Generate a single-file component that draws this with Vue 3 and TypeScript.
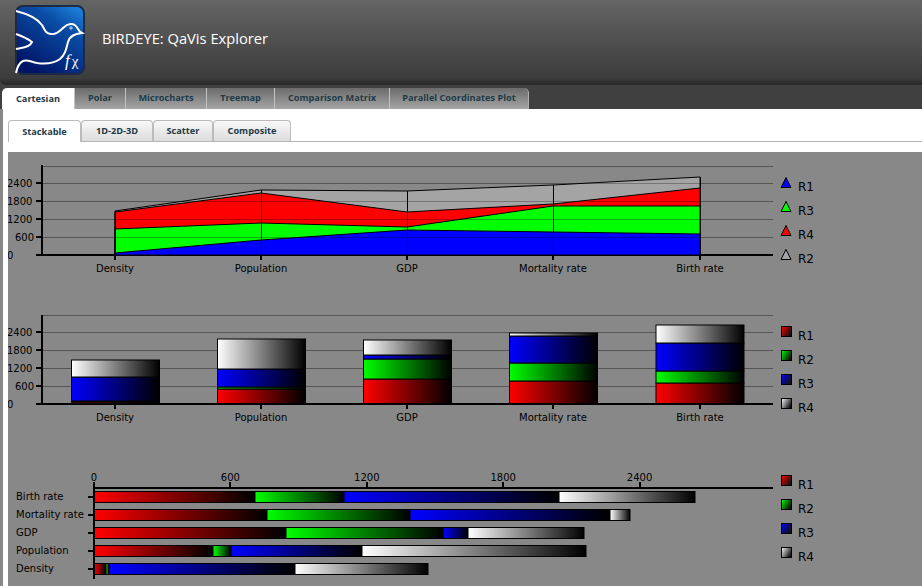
<template>
  <div class="page">
    <header class="top">
      <svg class="logo" width="72" height="72" viewBox="0 0 72 72">
        <defs>
          <linearGradient id="logoBg" x1="1" y1="0" x2="0.35" y2="1">
            <stop offset="0" stop-color="#1f8ae6" />
            <stop offset="0.35" stop-color="#0a4da6" />
            <stop offset="1" stop-color="#001566" />
          </linearGradient>
        </defs>
        <rect x="2" y="2" width="68" height="68" rx="7" fill="url(#logoBg)" stroke="#1c2a44" stroke-width="2" />
        <path d="M2 7 C14 10 23 14 28 21 C31 26 31 29 37 30 C42 31 46 27 49 24 C53 20 60 17 64 25 C65 27 66 28 68 29 C62 30 56 31 54 38 C52 46 51 51 46 55 C39 60 30 60 23 59 C17 58 13 55 9 57 C5 59 3 64 2 69" fill="none" stroke="#fff" stroke-width="2" />
        <path d="M2 30 C8 32 14 35 18 38 C17 40 16 41 14 42 C10 44 6 44 2 45" fill="none" stroke="#fff" stroke-width="2" />
        <circle cx="57" cy="24" r="1.2" fill="none" stroke="#fff" stroke-width="0.8" />
        <text x="51" y="62" class="fx">f<tspan class="chi" dx="2">χ</tspan></text>
      </svg>
      <span class="title">BIRDEYE: QaVis Explorer</span>
    </header>

    <nav class="tabs">
      <span
        v-for="(t, i) in mainTabs"
        :key="t"
        class="tab"
        :class="{ active: i === 0 }"
      >{{ t }}</span>
    </nav>

    <main class="content">
      <nav class="subtabs">
        <span
          v-for="(t, i) in subTabs"
          :key="t"
          class="subtab"
          :class="{ active: i === 0 }"
        >{{ t }}</span>
      </nav>

      <section class="charts">
        <svg class="chart" width="914" height="434" viewBox="8 152 914 434">
          <defs>
            <linearGradient v-for="c in fills" :id="'h' + c.name" :key="'h' + c.name" x1="0" y1="0" x2="1" y2="0">
              <stop offset="0" :stop-color="c.color" />
              <stop offset="1" stop-color="#000" />
            </linearGradient>
            <linearGradient v-for="c in fills" :id="'d' + c.name" :key="'d' + c.name" x1="0" y1="0" x2="1" y2="0.6">
              <stop offset="0" :stop-color="c.color" />
              <stop offset="1" stop-color="#111" />
            </linearGradient>
            <clipPath id="areaClip">
              <polygon :points="areas[0].points" />
            </clipPath>
          </defs>

          <!-- area chart -->
          <line v-for="y in gridFor(255)" :key="'a' + y" x1="42" x2="773" :y1="y + 0.5" :y2="y + 0.5" class="grid" />
          <line x1="42" x2="42" y1="165" y2="256" class="axis" />
          <line x1="36" x2="773" y1="255" y2="255" class="axis" />
          <polygon v-for="a in areas" :key="a.name" :points="a.points" :fill="a.color" class="outline" />
          <g clip-path="url(#areaClip)">
            <line v-for="y in gridFor(255).slice(1, 5)" :key="'o' + y" x1="115" x2="700" :y1="y + 0.5" :y2="y + 0.5" class="grid over" />
          </g>
          <line v-for="(x, i) in catX" :key="'v' + x" :x1="x" :x2="x" :y1="grayTop[i]" y2="255" class="thin" />
          <g v-for="(y, i) in gridFor(255)" :key="'b' + y">
            <line x1="36" x2="42" :y1="y" :y2="y" class="axis" v-if="i < 5" />
            <text v-if="i < 5" :x="yLabelX[i]" :y="y + 4" class="lbl">{{ yLabels[i] }}</text>
          </g>
          <g v-for="(c, i) in cats" :key="'c' + c">
            <line :x1="catX[i]" :x2="catX[i]" y1="255" y2="260" class="axis" />
            <text :x="catX[i]" y="272" text-anchor="middle" class="lbl">{{ c }}</text>
          </g>
          <g v-for="(l, i) in areaLegend" :key="'l' + l.name">
            <polygon :points="triangle(i)" :fill="l.color" stroke="#000" />
            <text x="798" :y="191 + i * 24" class="leg">{{ l.name }}</text>
          </g>

          <!-- stacked columns -->
          <line v-for="y in gridFor(404)" :key="'d' + y" x1="42" x2="773" :y1="y + 0.5" :y2="y + 0.5" class="grid" />
          <g v-for="(b, i) in columns" :key="'col' + i">
            <rect
              v-for="s in b.parts"
              :key="s.name"
              :x="b.x"
              :y="s.y"
              width="88"
              :height="s.h"
              :fill="'url(#h' + s.name + ')'"
              class="outline"
            />
          </g>
          <g v-for="(y, i) in gridFor(404)" :key="'e' + y">
            <line x1="36" x2="42" :y1="y" :y2="y" class="axis" v-if="i < 5" />
            <text v-if="i < 5" :x="yLabelX[i]" :y="y + 4" class="lbl">{{ yLabels[i] }}</text>
          </g>
          <line x1="42" x2="42" y1="315" y2="405" class="axis" />
          <line x1="36" x2="773" y1="404" y2="404" class="axis" />
          <g v-for="(c, i) in cats" :key="'f' + c">
            <line :x1="catX[i]" :x2="catX[i]" y1="404" y2="409" class="axis" />
            <text :x="catX[i]" y="421" text-anchor="middle" class="lbl">{{ c }}</text>
          </g>
          <g v-for="(n, i) in legendNames" :key="'g' + n">
            <rect x="781.5" :y="326.5 + i * 24" width="10" height="10" :fill="'url(#d' + fills[i].name + ')'" stroke="#000" />
            <text x="798" :y="340 + i * 24" class="leg">{{ n }}</text>
          </g>

          <!-- horizontal bars -->
          <g v-for="(r, i) in rows" :key="r.label">
            <rect
              v-for="s in r.parts"
              :key="s.name"
              :x="s.x"
              :y="491.5 + i * 18"
              :width="s.w"
              height="11"
              :fill="'url(#h' + s.name + ')'"
              class="outline"
            />
            <line x1="88" x2="94" :y1="497 + i * 18" :y2="497 + i * 18" class="axis" />
            <text x="16" :y="500 + i * 18" class="lbl">{{ r.label }}</text>
          </g>
          <line x1="94" x2="94" y1="482" y2="579" class="axis" />
          <line x1="94" x2="773" y1="488" y2="488" class="axis" />
          <g v-for="(v, i) in hTicks" :key="v">
            <line :x1="94 + i * 136.4" :x2="94 + i * 136.4" y1="482" y2="488" class="axis" />
            <text :x="94 + i * 136.4" y="481" text-anchor="middle" class="lbl">{{ v }}</text>
          </g>
          <g v-for="(n, i) in legendNames" :key="'h' + n">
            <rect x="781.5" :y="475.5 + i * 24" width="10" height="10" :fill="'url(#d' + fills[i].name + ')'" stroke="#000" />
            <text x="798" :y="489 + i * 24" class="leg">{{ n }}</text>
          </g>
        </svg>
      </section>
    </main>
  </div>
</template>

<script setup lang="ts">
type Fill = { name: string; color: string }

const mainTabs: string[] = ['Cartesian', 'Polar', 'Microcharts', 'Treemap', 'Comparison Matrix', 'Parallel Coordinates Plot']
const subTabs: string[] = ['Stackable', '1D-2D-3D', 'Scatter', 'Composite']

const cats: string[] = ['Density', 'Population', 'GDP', 'Mortality rate', 'Birth rate']
const catX: number[] = [115, 261, 407, 553, 700]
const yLabels: string[] = ['0', '600', '1200', '1800', '2400']
const yLabelX: number[] = [7, 15, 7, 7, 7]
const hTicks: string[] = ['0', '600', '1200', '1800', '2400']
const legendNames: string[] = ['R1', 'R2', 'R3', 'R4']

const fills: Fill[] = [
  { name: 'R1', color: '#ff0000' },
  { name: 'R2', color: '#00ff00' },
  { name: 'R3', color: '#0000ff' },
  { name: 'R4', color: '#ffffff' },
]

const areaLegend: Fill[] = [
  { name: 'R1', color: '#0000ff' },
  { name: 'R3', color: '#00ff00' },
  { name: 'R4', color: '#ff0000' },
  { name: 'R2', color: '#a4a4a4' },
]

const gridFor = (base: number): number[] => [base, base - 18, base - 36, base - 54, base - 72, base - 89]

// tops of each stacked area, in pixels
const blueTop = [253, 240, 230, 232, 234]
const greenTop = [229, 223, 227, 206, 206]
const redTop = [212, 193, 212, 204, 188]
const grayTop = [211, 190, 191, 185, 177]

const areaOf = (name: string, color: string, tops: number[]) => ({
  name,
  color,
  points: [
    ...catX.map((x, i) => `${x},${tops[i]}`),
    `${catX[4]},255`,
    `${catX[0]},255`,
  ].join(' '),
})

const areas = [
  areaOf('R2', '#a4a4a4', grayTop),
  areaOf('R4', '#ff0000', redTop),
  areaOf('R3', '#00ff00', greenTop),
  areaOf('R1', '#0000ff', blueTop),
]

const triangle = (i: number): string => {
  const t = 177.5 + i * 24
  return `786,${t} 791,${t + 10} 781,${t + 10}`
}

const columnOf = (x: number, tops: number[]) => {
  const base = [404, ...tops]
  return {
    x,
    parts: tops.map((top, i) => ({ name: fills[i].name, y: top, h: base[i] - top })),
  }
}

const columns = [
  columnOf(71.5, [402, 401, 377, 360]),
  columnOf(217.5, [389, 387, 369, 339]),
  columnOf(363.5, [379, 359, 355, 340]),
  columnOf(509.5, [381, 363, 336, 333]),
  columnOf(656, [383, 371, 343, 325]),
]

const rowOf = (label: string, edges: number[]) => ({
  label,
  parts: fills.map((f, i) => ({ name: f.name, x: edges[i], w: edges[i + 1] - edges[i] })),
})

const rows = [
  rowOf('Birth rate', [94, 255, 344, 559, 695]),
  rowOf('Mortality rate', [94, 267, 410, 610, 630]),
  rowOf('GDP', [94, 286, 443, 468, 584]),
  rowOf('Population', [94, 213, 231, 362, 586]),
  rowOf('Density', [94, 106, 109, 295, 428]),
]
</script>

<style scoped>
.page {
  width: 922px;
  height: 586px;
  overflow: hidden;
  display: flex;
  flex-direction: column;
  background: #404040;
  font-family: "Open Sans", sans-serif;
}

.top {
  height: 85px;
  flex: none;
  display: flex;
  align-items: flex-start;
  gap: 14px;
  padding: 4px 0 0 14px;
  box-sizing: border-box;
  background: linear-gradient(#656565, #3c3c3c 94%, #2c2c2c);
  border-bottom-left-radius: 6px;
  border-bottom: 2px solid #2a2a2a;
}

.logo {
  flex: none;
}

.fx {
  font-family: "Liberation Serif", serif;
  font-style: italic;
  font-size: 17px;
  fill: #fff;
}

.chi {
  font-style: normal;
  font-size: 15px;
}

.title {
  margin: 24px 0 0 2px;
  color: #fff;
  font-size: 14.7px;
}

.tabs {
  height: 21px;
  margin-top: 3px;
  flex: none;
  display: flex;
  padding-left: 2px;
}

.tab {
  box-sizing: border-box;
  text-align: center;
  line-height: 19px;
  font-size: 9.2px;
  font-weight: 700;
  color: #1d3a47;
  background: linear-gradient(#6b6b6b, #a5a5a5);
  border-left: 1px solid #c2c2c2;
  white-space: nowrap;
}

.tab:nth-child(1) { width: 72px; }
.tab:nth-child(2) { width: 51px; }
.tab:nth-child(3) { width: 81px; }
.tab:nth-child(4) { width: 68px; }
.tab:nth-child(5) { width: 115px; }
.tab:nth-child(6) { width: 140px; }

.tab:last-child {
  border-top-right-radius: 5px;
  border-right: 1px solid #b0b0b0;
}

.tab.active {
  background: #fff;
  border-left: none;
  border-top-left-radius: 5px;
  line-height: 22px;
}

.content {
  flex: 1;
  background: #fff;
  border-left: 3px solid #888;
  display: flex;
  flex-direction: column;
  min-height: 0;
}

.subtabs {
  margin: 11px 0 0 5px;
  height: 21px;
  flex: none;
  display: flex;
  border-bottom: 1px solid #b5b5b5;
}

.subtab {
  box-sizing: border-box;
  height: 21px;
  text-align: center;
  line-height: 19px;
  font-size: 9.2px;
  font-weight: 700;
  color: #1d3a47;
  background: linear-gradient(#f8f8f8, #dcdcdc);
  border: 1px solid #bbb;
  border-bottom: none;
  border-radius: 4px 4px 0 0;
}

.subtab:nth-child(1) { width: 73px; }
.subtab:nth-child(2) { width: 72px; }
.subtab:nth-child(3) { width: 60px; }
.subtab:nth-child(4) { width: 78px; }

.subtab.active {
  background: #fff;
  height: 22px;
  line-height: 21px;
}

.charts {
  margin: 10px 0 0 5px;
  flex: 1;
  min-height: 0;
  background: #888888;
}

.chart {
  display: block;
}

.grid {
  stroke: #555;
  stroke-width: 1;
}

.grid.over {
  stroke: #000;
  opacity: 0.28;
}

.axis {
  stroke: #000;
  stroke-width: 2;
  shape-rendering: crispEdges;
}

.thin {
  stroke: #000;
  stroke-width: 1;
  shape-rendering: crispEdges;
}

.outline {
  stroke: #000;
  stroke-width: 1;
}

.lbl {
  font-family: "DejaVu Sans", sans-serif;
  font-size: 10px;
  fill: #000;
}

.leg {
  font-family: "DejaVu Sans", sans-serif;
  font-size: 12px;
  fill: #000;
}
</style>
